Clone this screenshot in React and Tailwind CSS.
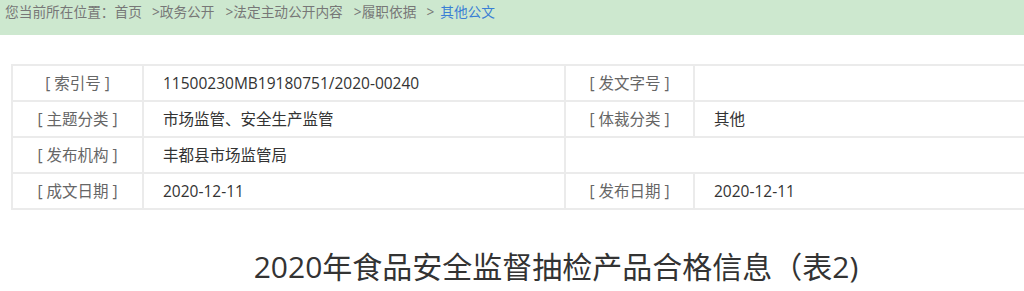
const font = { fontFamily: "'Open Sans', 'Noto Sans CJK SC', sans-serif" };

const rows = [
  ['[ 索引号 ]', '11500230MB19180751/2020-00240', '[ 发文字号 ]', ''],
  ['[ 主题分类 ]', '市场监管、安全生产监管', '[ 体裁分类 ]', '其他'],
  ['[ 发布机构 ]', '丰都县市场监管局', null, null],
  ['[ 成文日期 ]', '2020-12-11', '[ 发布日期 ]', '2020-12-11'],
];

export default function App() {
  return (
    <div className="w-[1024px] h-[291px] overflow-hidden bg-white" style={font}>
      {/* breadcrumb */}
      <div className="h-[35px] bg-[#cde8cf] pl-[5px] pt-[2px] text-[13.7px] leading-[20px] text-[#777] whitespace-nowrap">
        <span>您当前所在位置：</span>
        <span className="mr-[10px]">首页</span>
        <span className="mr-[11px]">&gt;政务公开</span>
        <span className="mr-[11px]">&gt;法定主动公开内容</span>
        <span className="mr-[10px]">&gt;履职依据</span>
        <span className="mr-[6px]">&gt;</span>
        <span className="text-[#3a7fd5]">其他公文</span>
      </div>

      <div className="w-[1090px] ml-[11px]">
        <table className="mt-[29px] w-full border-collapse text-[15.5px]">
          <tbody>
            {rows.map((r, i) => (
              <tr key={i} className="h-[36px]">
                <td className="w-[131px] border-2 border-[#ebebeb] pt-px text-center text-[#666]">{r[0]}</td>
                <td className="w-[422px] border-2 border-[#ebebeb] pt-px pl-[19px] text-[#333]">{r[1]}</td>
                {r[2] === null ? (
                  <td colSpan={2} className="border-2 border-[#ebebeb]"></td>
                ) : (
                  <>
                    <td className="w-[129px] border-2 border-[#ebebeb] pt-px text-center text-[#666]">{r[2]}</td>
                    <td className="border-2 border-[#ebebeb] pt-px pl-[19px] text-[#333]">{r[3]}</td>
                  </>
                )}
              </tr>
            ))}
          </tbody>
        </table>

        <h1 className="mt-[37px] text-center text-[30px] leading-[40px] text-[#333]">
          2020年食品安全监督抽检产品合格信息（表2)
        </h1>
      </div>
    </div>
  );
}
